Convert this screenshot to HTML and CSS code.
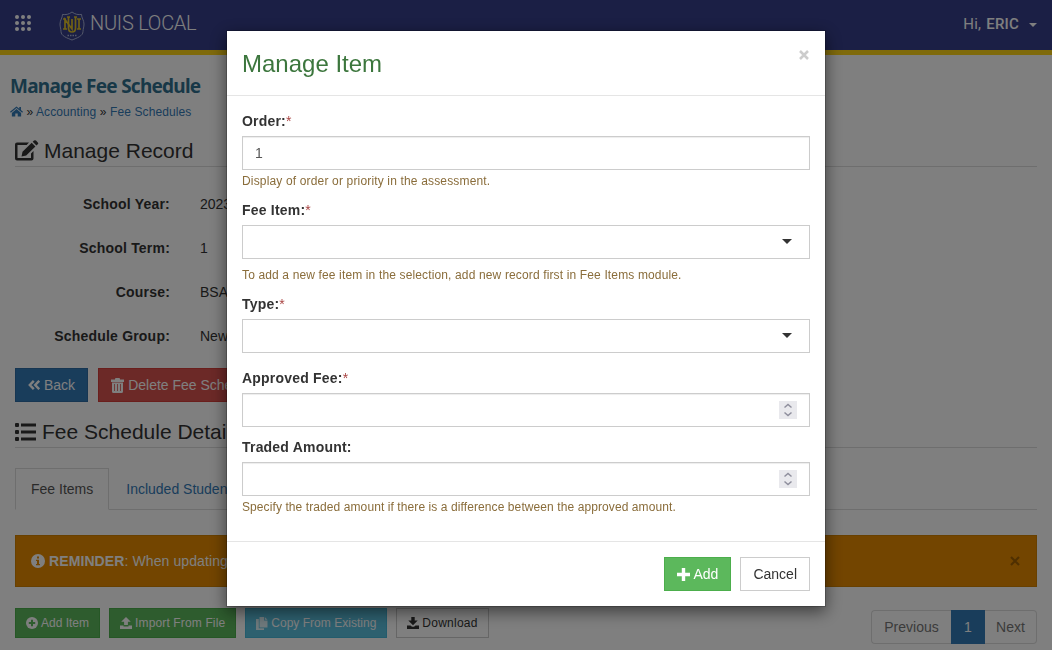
FILE: index.html
```
<!DOCTYPE html>
<html lang="en">
<head>
  <meta charset="UTF-8" />
  <meta name="viewport" content="width=device-width, initial-scale=1.0"/>
  <title>Manage Fee Schedule - NUIS LOCAL</title>
  <link rel="stylesheet" href="styles.css">
</head>
<body>
  <!-- Top Navigation -->
  <nav class="navbar">
    <svg class="apps-icon" width="16" height="17" viewBox="0 0 16 17" fill="#fff">
      <circle cx="2" cy="2" r="2"/><circle cx="8" cy="2" r="2"/><circle cx="14" cy="2" r="2"/>
      <circle cx="2" cy="8" r="2"/><circle cx="8" cy="8" r="2"/><circle cx="14" cy="8" r="2"/>
      <circle cx="2" cy="14" r="2"/><circle cx="8" cy="14" r="2"/><circle cx="14" cy="14" r="2"/>
    </svg>
    <a href="#" class="brand">
      <svg width="26" height="30" viewBox="0 0 26 30" fill="none">
        <path d="M13 1 C10 3.4 6.5 4 3.5 3.4 C3.5 7 1 9 1 13 C1 16 2 18 2 20.5 C2 25 8 27 13 29 C18 27 24 25 24 20.5 C24 18 25 16 25 13 C25 9 22.5 7 22.5 3.4 C19.5 4 16 3.4 13 1Z" stroke="#a9b2d6"/>
        <path d="M6 18V8.500L13 18V8M20 8V18M4 8h3M4 18h4M18 8h4M18 18h4" stroke="#e0c22a" stroke-width="1.700"/>
        <path d="M9.500 6V17Q9.500 21 13 21T16.500 17V6M8 6h3M15 6h3" stroke="#e0c22a" stroke-width="1.700"/>
        <path d="M8.500 24.500h9" stroke="#a9b2d6" stroke-width="1.500" stroke-dasharray="1.500 1"/>
      </svg>
      <span>NUIS LOCAL</span>
    </a>
    <a href="#" class="user-menu">Hi, <b>ERIC</b> <i class="caret"></i></a>
  </nav>

  <div class="page-title">
    <h1>Manage Fee Schedule</h1>
    <div class="breadcrumbs">
      <a href="#"><svg width="13" height="11" viewBox="0 0 14 11" fill="currentColor"><path d="M7 0L0 5.800L.9 6.800L7 1.800L13.100 6.800L14 5.800L11.800 4V.700H10V2.500ZM7 2.900L2 7V11H5.700V7.700H8.300V11H12V7Z"/></svg></a>
      » <a href="#">Accounting</a> » <a href="#">Fee Schedules</a>
    </div>
  </div>

  <main class="container">
    <h2 class="page-header">
      <svg width="24" height="21" viewBox="0 0 24 21" fill="currentColor"><path d="M0 4.500Q0 2.500 2 2.500H14L11.700 5H2.500V18H16V13.500L18.500 11V18.500Q18.500 20.500 16.500 20.500H2Q0 20.500 0 18.500ZM6.500 16.500L7.500 11.800L16.700 2.800L20.400 6.500L11.200 15.600ZM17.700 1.800L19 .600Q20 -.300 21 .600L22.800 2.400Q23.700 3.300 22.800 4.200L21.400 5.500Z"/></svg>
      <span>Manage Record</span>
    </h2>

    <dl class="record">
      <dt>School Year:</dt><dd>2023</dd>
      <dt>School Term:</dt><dd>1</dd>
      <dt>Course:</dt><dd>BSA</dd>
      <dt>Schedule Group:</dt><dd>New</dd>
    </dl>

    <div class="actions">
      <button class="btn btn-primary"><svg width="12" height="10" viewBox="0 0 12 10" fill="none" stroke="currentColor" stroke-width="2.400"><path d="M5.800 .800L1.800 5L5.800 9.200M11.200 .800L7.200 5L11.200 9.200"/></svg> Back</button>
      <button class="btn btn-danger"><svg width="13" height="15" viewBox="0 0 13 15" fill="currentColor"><path fill-rule="evenodd" d="M0 1.500H4V1Q4 0 5 0H8Q9 0 9 1V1.500H13V4H0ZM1 4.500H12V13.500Q12 15 10.500 15H2.500Q1 15 1 13.500ZM3.200 6V13H4V6ZM6.100 6V13H6.900V6ZM9 6V13H9.800V6Z"/></svg> Delete Fee Schedule</button>
    </div>

    <h2 class="page-header details">
      <svg width="21" height="18" viewBox="0 0 21 18" fill="currentColor"><rect y="0" width="4" height="4" rx="1"/><rect y="7" width="4" height="4" rx="1"/><rect y="14" width="4" height="4" rx="1"/><path d="M6 .500H21V3.500H6ZM6 7.500H21V10.500H6ZM6 14.500H21V17.500H6Z"/></svg>
      <span>Fee Schedule Details</span>
    </h2>

    <ul class="nav-tabs">
      <li class="active"><a href="#">Fee Items</a></li>
      <li><a href="#">Included Students</a></li>
    </ul>

    <div class="alert">
      <svg width="14" height="14" viewBox="0 0 14 14"><circle cx="7" cy="7" r="7" fill="#fff"/><path d="M6 2.500H8V4.500H6ZM5 5.700H8V10H9V11.300H5V10H6V7H5Z" fill="#e68a00"/></svg>
      <span><b>REMINDER</b>: When updating</span>
      <svg class="alert-close" width="10" height="10" viewBox="0 0 10 10"><path d="M1 1L9 9M9 1L1 9" stroke="#000" stroke-width="2.200"/></svg>
    </div>

    <div class="toolbar">
      <button class="btn btn-sm btn-success"><svg width="12" height="12" viewBox="0 0 12 12"><circle cx="6" cy="6" r="6" fill="currentColor"/><path d="M6 2.800V9.200M2.800 6H9.200" stroke="#5cb85c" stroke-width="2"/></svg> Add Item</button>
      <button class="btn btn-sm btn-success import"><svg width="12" height="12" viewBox="0 0 12 12" fill="currentColor"><path d="M6 0L10.800 4.800H7.900V8H4.100V4.800H1.200ZM0 8.500H3.500V9.500H8.500V8.500H12V12H0Z"/></svg> Import From File</button>
      <button class="btn btn-sm btn-info"><svg width="12" height="13" viewBox="0 0 12 13" fill="currentColor"><path d="M3.500 0H8V3.500H11.500V10.500H3.500ZM8.800 0L11.500 2.700H8.800ZM0 2H2.800V11.200H8V13H0Z"/></svg> Copy From Existing</button>
      <button class="btn btn-sm btn-default download"><svg width="12" height="12" viewBox="0 0 12 12" fill="currentColor"><path d="M4.300 0H7.700V3.500H10.700L6 8.200L1.300 3.500H4.300ZM0 8.500H3.500L5 9.800H7L8.500 8.500H12V12H0Z"/></svg> Download</button>
      <ul class="pagination">
        <li><a href="#">Previous</a></li>
        <li class="active"><a href="#">1</a></li>
        <li><a href="#">Next</a></li>
      </ul>
    </div>
  </main>

  <!-- Manage Item Modal -->
  <div class="modal-backdrop">
    <form class="modal">
      <div class="modal-header">
        <h4>Manage Item</h4>
        <svg class="close" width="10" height="10" viewBox="0 0 10 10"><path d="M1 1L9 9M9 1L1 9" stroke="#ccc" stroke-width="2.500"/></svg>
      </div>
      <div class="modal-body">
        <div class="form-group">
          <label for="order">Order:<i>*</i></label>
          <input type="text" id="order" class="form-control" value="1" />
          <span class="help">Display of order or priority in the assessment.</span>
        </div>
        <div class="form-group item-group">
          <label>Fee Item:<i>*</i></label>
          <div class="form-control select"><i class="caret"></i></div>
          <span class="help">To add a new fee item in the selection, add new record first in Fee Items module.</span>
        </div>
        <div class="form-group type-group">
          <label>Type:<i>*</i></label>
          <div class="form-control select"><i class="caret"></i></div>
        </div>
        <div class="form-group">
          <label for="approved">Approved Fee:<i>*</i></label>
          <div class="number">
            <input type="text" id="approved" class="form-control" />
            <svg class="spinner" width="18" height="18" viewBox="0 0 18 18"><path d="M5.500 6.500L9 3.500L12.500 6.500M5.500 11.500L9 14.500L12.500 11.500"/></svg>
          </div>
        </div>
        <div class="form-group">
          <label for="traded">Traded Amount:</label>
          <div class="number">
            <input type="text" id="traded" class="form-control" />
            <svg class="spinner" width="18" height="18" viewBox="0 0 18 18"><path d="M5.500 6.500L9 3.500L12.500 6.500M5.500 11.500L9 14.500L12.500 11.500"/></svg>
          </div>
          <span class="help">Specify the traded amount if there is a difference between the approved amount.</span>
        </div>
      </div>
      <div class="modal-footer">
        <button type="button" class="btn btn-success add"><svg width="13" height="13" viewBox="0 0 13 13"><path d="M6.500 0V13M0 6.500H13" stroke="#fff" stroke-width="3.400"/></svg> Add</button>
        <button type="button" class="btn btn-default">Cancel</button>
      </div>
    </form>
  </div>
</body>
</html>
```
FILE: styles.css
```
/* Base Styles */
* {
  box-sizing: border-box;
}
body {
  margin: 0;
  height: 650px;
  overflow: hidden;
  font-family: "Liberation Sans", Arial, sans-serif;
  font-size: 14px;
  line-height: 20px;
  color: #333;
  background: #fff;
}
a {
  color: #337ab7;
  text-decoration: none;
}
svg {
  flex: none;
}
h1, h2, h4, ul, dl, dd {
  margin: 0;
  padding: 0;
  font-weight: normal;
}
ul {
  list-style: none;
}

/* Navbar */
.navbar {
  display: flex;
  height: 55px;
  padding: 0 15px;
  background: #363e8a;
  border-bottom: 5px solid #ffd417;
  font-family: Roboto, "Open Sans", sans-serif;
}
.navbar a {
  color: #fff;
}
.apps-icon {
  margin-top: 15px;
}
.brand {
  display: flex;
  gap: 5px;
  margin-left: 28px;
  padding-top: 11px;
  font-size: 20px;
  font-weight: 300;
  line-height: 25px;
  letter-spacing: -0.25px;
}
.user-menu {
  display: flex;
  align-items: center;
  gap: 5px;
  height: 48px;
  margin-left: auto;
  font-size: 15px;
  letter-spacing: 0.2px;
}
.user-menu b {
  font-weight: 500;
}
.caret {
  display: inline-block;
  border-top: 4px solid;
  border-right: 4px solid transparent;
  border-left: 4px solid transparent;
}
.user-menu .caret {
  margin: 2px 0 0 5px;
}

/* Title */
.page-title {
  padding: 18px 10px 0;
}
.page-title h1 {
  font: bold 19px/26px "Noto Sans", sans-serif;
  color: #31708f;
  letter-spacing: -0.75px;
}
.breadcrumbs {
  margin-top: 3px;
  font-size: 12px;
  letter-spacing: 0.1px;
}
.breadcrumbs svg {
  vertical-align: -1px;
}

/* Record */
.container {
  padding: 0 15px;
}
.page-header {
  display: flex;
  align-items: center;
  gap: 5px;
  height: 32px;
  margin-top: 13px;
  border-bottom: 1px solid #ddd;
  font-size: 21px;
}
.record {
  display: grid;
  grid-template-columns: 155px 1fr;
  column-gap: 30px;
  padding-top: 15px;
  line-height: 44px;
}
.record dt {
  font-weight: bold;
  text-align: right;
  letter-spacing: 0.2px;
}
.actions {
  display: flex;
  gap: 10px;
  margin-top: 10px;
}

/* Buttons */
.btn {
  display: flex;
  align-items: center;
  gap: 4px;
  height: 34px;
  padding: 0 12px;
  border: 1px solid;
  font: 14px "Liberation Sans", Arial, sans-serif;
  color: #fff;
}
.btn-sm {
  height: 30px;
  padding: 0 10px;
  font-size: 12px;
  gap: 3px;
}
.btn-primary {
  background: #337ab7;
  border-color: #2e6da4;
}
.btn-danger {
  background: #d9534f;
  border-color: #d43f3a;
}
.btn-success {
  background: #5cb85c;
  border-color: #4cae4c;
}
.btn-info {
  background: #5bc0de;
  border-color: #46b8da;
  letter-spacing: 0.02px;
}
.btn-info svg {
  opacity: 0.8;
}
.btn-default {
  background: #fff;
  border-color: #ccc;
  color: #333;
}
.btn.add {
  gap: 3px;
}
.btn.import {
  letter-spacing: 0.14px;
}
.btn.download {
  letter-spacing: 0.25px;
}

/* Details */
.details {
  margin-top: 14px;
  gap: 6px;
}
.nav-tabs {
  display: flex;
  height: 42px;
  margin-top: 20px;
  border-bottom: 1px solid #ddd;
}
.nav-tabs li {
  height: 42px;
  padding: 10px 16px;
  border: 1px solid transparent;
}
.nav-tabs li.active {
  padding: 10px 15px;
  border: 1px solid #ddd;
  border-bottom-color: #fff;
}
.nav-tabs .active a {
  color: #555;
}
.alert {
  display: flex;
  align-items: center;
  gap: 4px;
  height: 52px;
  margin-top: 25px;
  padding: 0 16px 0 15px;
  border: 1px solid #d08000;
  background: #e68a00;
  color: #fff;
  letter-spacing: 0.1px;
}
.alert-close {
  margin-left: auto;
  opacity: 0.3;
}
.toolbar {
  display: flex;
  gap: 9px;
  margin-top: 21px;
}
.pagination {
  display: flex;
  margin: 2px 0 0 auto;
}
.pagination li {
  width: 34px;
  height: 34px;
  padding: 6px 0;
  border: 1px solid #ddd;
  border-width: 1px 0;
  text-align: center;
}
.pagination li:first-child {
  width: 80px;
  border-left-width: 1px;
  border-radius: 4px 0 0 4px;
}
.pagination li:last-child {
  width: 52px;
  border-right-width: 1px;
  border-radius: 0 4px 4px 0;
}
.pagination a {
  color: #777;
}
.pagination .active {
  background: #337ab7;
  border-color: #337ab7;
}
.pagination .active a {
  color: #fff;
}

/* Modal */
.modal-backdrop {
  position: fixed;
  inset: 0;
  background: rgba(0, 0, 0, 0.5);
}
.modal {
  width: 600px;
  height: 577px;
  margin: 30px auto;
  background: #fff;
  background-clip: padding-box;
  border: 1px solid rgba(0, 0, 0, 0.2);
  box-shadow: 0 5px 15px rgba(0, 0, 0, 0.5);
}
.modal-header {
  display: flex;
  justify-content: space-between;
  height: 65px;
  padding: 15px 16px 0 15px;
  border-bottom: 1px solid #e5e5e5;
}
.modal-header h4 {
  font-size: 24px;
  line-height: 36px;
  color: #3c763d;
}
.close {
  margin-top: 4px;
}
.modal-body {
  height: 445px;
  padding: 15px;
}
.form-group {
  margin-bottom: 10px;
}
.form-group label {
  display: block;
  margin-bottom: 5px;
  font-weight: bold;
  letter-spacing: 0.2px;
}
.form-group label i {
  color: #a94442;
  font-weight: normal;
  font-style: normal;
}
.form-control {
  display: block;
  width: 100%;
  height: 34px;
  padding: 6px 12px;
  border: 1px solid #ccc;
  box-shadow: inset 0 1px 1px rgba(0, 0, 0, 0.075);
  font: 14px/20px "Liberation Sans", Arial, sans-serif;
  color: #555;
}
.form-control.select {
  display: flex;
  align-items: center;
  justify-content: flex-end;
  padding: 5px 17px 7px;
  box-shadow: none;
  color: #333;
}
.select .caret {
  border-width: 5px 5px 0;
}
.help {
  display: block;
  padding-top: 2px;
  font-size: 12px;
  line-height: 18px;
  letter-spacing: 0.14px;
  color: #8a6d3b;
}
.form-group:first-child .help {
  letter-spacing: 0.16px;
}
.form-group:last-child .help {
  letter-spacing: 0.09px;
}
.item-group .help {
  margin-top: 5px;
}
.type-group {
  margin-bottom: 15px;
}
.number {
  position: relative;
}
.spinner {
  position: absolute;
  top: 8px;
  right: 13px;
  background: #e9e9ed;
  fill: none;
  stroke: #8f8f9d;
  stroke-width: 1.5;
}
.modal-footer {
  display: flex;
  justify-content: flex-end;
  gap: 9px;
  padding: 15px;
  border-top: 1px solid #e5e5e5;
}
```
